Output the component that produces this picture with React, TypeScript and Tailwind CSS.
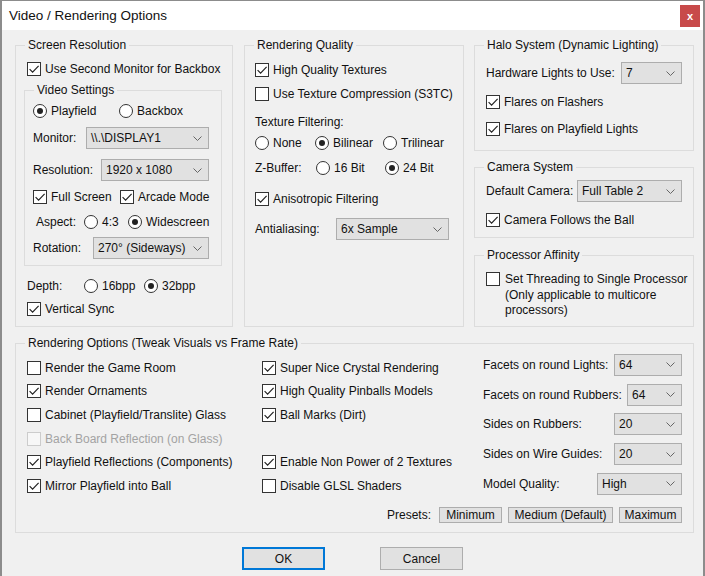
import React from 'react';

type CheckProps = { checked?: boolean; disabled?: boolean; label: string; className?: string };

const Check = ({ checked, disabled, label, className = '' }: CheckProps) => (
  <div className={`flex h-[16px] items-center ${className}`}>
    <span
      className={`flex h-[14px] w-[14px] shrink-0 items-center justify-center border ${
        disabled ? 'border-[#cccccc] bg-[#f7f7f7]' : 'border-[#333333] bg-white'
      }`}
    >
      {checked && (
        <svg width="12" height="12" viewBox="0 0 12 12">
          <path d="M1.6 6.1 L4.6 9.1 L10.6 2.9" fill="none" stroke="#222" strokeWidth="1.2" />
        </svg>
      )}
    </span>
    <span className={`ml-[4px] whitespace-nowrap ${disabled ? 'text-[#a3a3a3]' : ''}`}>{label}</span>
  </div>
);

const Radio = ({ checked, label, className = '' }: { checked?: boolean; label: string; className?: string }) => (
  <div className={`flex h-[16px] items-center ${className}`}>
    <span className="flex h-[14px] w-[14px] shrink-0 items-center justify-center rounded-full border border-[#333333] bg-white">
      {checked && <span className="h-[6px] w-[6px] rounded-full bg-[#222]" />}
    </span>
    <span className="ml-[4px] whitespace-nowrap">{label}</span>
  </div>
);

const Select = ({ value, w, className = '' }: { value: string; w: string; className?: string }) => (
  <div
    className={`flex h-[22px] shrink-0 items-center justify-between border border-[#adadad] bg-[#e1e1e1] pl-[4px] pr-[6px] ${w} ${className}`}
  >
    <span className="whitespace-nowrap">{value}</span>
    <svg width="9" height="5" viewBox="0 0 9 5">
      <path d="M0.5 0.5 L4.5 4.5 L8.5 0.5" fill="none" stroke="#666" />
    </svg>
  </div>
);

const Group = ({ title, className = '', children }: { title: string; className?: string; children: React.ReactNode }) => (
  <fieldset className={`border border-[#dcdcdc] ${className}`}>
    <legend className="ml-[9px] px-[3px] leading-[14px]">{title}</legend>
    {children}
  </fieldset>
);

const Button = ({ label, w, def }: { label: string; w: string; def?: boolean }) => (
  <div
    className={`flex h-[23px] items-center justify-center bg-[#e1e1e1] ${w} ${
      def ? 'border-2 border-[#0078d7]' : 'border border-[#adadad]'
    }`}
  >
    {label}
  </div>
);

const Preset = ({ label, w }: { label: string; w: string }) => (
  <div className={`flex h-[16px] items-center justify-center border border-[#adadad] bg-[#e1e1e1] ${w}`}>{label}</div>
);

export default function App() {
  return (
    <div className="h-[576px] w-[705px] overflow-hidden border-x-2 border-t border-[#8c8c8c] bg-[#f0f0f0] font-['Liberation_Sans',Arial,sans-serif] text-[12px] leading-[14px] text-[#111]">
      {/* title bar */}
      <div className="flex h-[29px] items-center justify-between bg-white pl-[7px] pr-[3px]">
        <span className="text-[13.5px]">Video / Rendering Options</span>
        <div className="flex h-[22px] w-[20px] items-center justify-center bg-[#c84a4a] text-[11px] font-bold text-white">
          x
        </div>
      </div>

      <div className="pl-[13px] pt-[8px]">
        <div className="flex items-start">
          {/* column 1 */}
          <Group title="Screen Resolution" className="h-[289px] w-[218px]">
            <div className="pl-[8px] pr-[10px]">
              <Check checked label="Use Second Monitor for Backbox" className="ml-[3px] mt-[9px]" />
              <Group title="Video Settings" className="mt-[6px]">
                <div className="pb-[6px] pl-[8px] pr-[11px]">
                  <div className="mt-[6px] flex">
                    <Radio checked label="Playfield" className="w-[86px]" />
                    <Radio label="Backbox" />
                  </div>
                  <div className="mt-[8px] flex items-center">
                    <span className="w-[53px]">Monitor:</span>
                    <Select value={'\\\\.\\DISPLAY1'} w="w-[123px]" />
                  </div>
                  <div className="mt-[10px] flex items-center">
                    <span className="w-[68px]">Resolution:</span>
                    <Select value="1920 x 1080" w="w-[108px]" />
                  </div>
                  <div className="mt-[8px] flex">
                    <Check checked label="Full Screen" className="w-[87px]" />
                    <Check checked label="Arcade Mode" />
                  </div>
                  <div className="ml-[3px] mt-[9px] flex items-center">
                    <span className="w-[48px]">Aspect:</span>
                    <Radio label="4:3" className="w-[44px]" />
                    <Radio checked label="Widescreen" />
                  </div>
                  <div className="mt-[7px] flex items-center">
                    <span className="w-[60px]">Rotation:</span>
                    <Select value="270° (Sideways)" w="w-[116px]" />
                  </div>
                </div>
              </Group>
              <div className="ml-[3px] mt-[12px] flex items-center">
                <span className="w-[57px]">Depth:</span>
                <Radio label="16bpp" className="w-[60px]" />
                <Radio checked label="32bpp" />
              </div>
              <Check checked label="Vertical Sync" className="ml-[3px] mt-[7px]" />
            </div>
          </Group>

          {/* column 2 */}
          <Group title="Rendering Quality" className="ml-[11px] h-[289px] w-[220px]">
            <div className="pl-[10px]">
              <Check checked label="High Quality Textures" className="mt-[10px]" />
              <Check label="Use Texture Compression (S3TC)" className="mt-[8px]" />
              <div className="mt-[13px] h-[14px]">Texture Filtering:</div>
              <div className="mt-[6px] flex">
                <Radio label="None" className="w-[60px]" />
                <Radio checked label="Bilinear" className="w-[68px]" />
                <Radio label="Trilinear" />
              </div>
              <div className="mt-[9px] flex items-center">
                <span className="w-[61px]">Z-Buffer:</span>
                <Radio label="16 Bit" className="w-[69px]" />
                <Radio checked label="24 Bit" />
              </div>
              <Check checked label="Anisotropic Filtering" className="mt-[15px]" />
              <div className="mt-[11px] flex items-center">
                <span className="w-[81px]">Antialiasing:</span>
                <Select value="6x Sample" w="w-[113px]" />
              </div>
            </div>
          </Group>

          {/* column 3 */}
          <div className="ml-[10px] flex w-[220px] flex-col">
            <Group title="Halo System (Dynamic Lighting)" className="h-[113px]">
              <div className="pl-[11px]">
                <div className="mt-[10px] flex items-center">
                  <span className="w-[135px]">Hardware Lights to Use:</span>
                  <Select value="7" w="w-[61px]" />
                </div>
                <Check checked label="Flares on Flashers" className="mt-[10px]" />
                <Check checked label="Flares on Playfield Lights" className="mt-[11px]" />
              </div>
            </Group>
            <Group title="Camera System" className="mt-[9px] h-[78px]">
              <div className="pl-[11px]">
                <div className="mt-[6px] flex items-center">
                  <span className="w-[91px]">Default Camera:</span>
                  <Select value="Full Table 2" w="w-[105px]" />
                </div>
                <Check checked label="Camera Follows the Ball" className="mt-[10px]" />
              </div>
            </Group>
            <Group title="Processor Affinity" className="mt-[10px] h-[79px]">
              <div className="mt-[10px] flex items-start pl-[11px]">
                <span className="h-[14px] w-[14px] shrink-0 border border-[#333333] bg-white" />
                <span className="ml-[5px] whitespace-nowrap leading-[15.5px]">
                  Set Threading to Single Processor
                  <br />
                  (Only applicable to multicore
                  <br />
                  processors)
                </span>
              </div>
            </Group>
          </div>
        </div>

        {/* rendering options */}
        <Group title="Rendering Options (Tweak Visuals vs Frame Rate)" className="mt-[9px] h-[197px] w-[679px]">
          <div className="pl-[11px] pr-[10px]">
            <div className="grid grid-cols-[235px_221px_199px]">
              <div className="mt-[6px] flex flex-col">
                <div className="flex h-[23.6px] items-center"><Check label="Render the Game Room" /></div>
                <div className="flex h-[23.6px] items-center"><Check checked label="Render Ornaments" /></div>
                <div className="flex h-[23.6px] items-center"><Check label="Cabinet (Playfield/Translite) Glass" /></div>
                <div className="flex h-[23.6px] items-center"><Check disabled label="Back Board Reflection (on Glass)" /></div>
                <div className="flex h-[23.6px] items-center"><Check checked label="Playfield Reflections (Components)" /></div>
                <div className="flex h-[23.6px] items-center"><Check checked label="Mirror Playfield into Ball" /></div>
              </div>
              <div className="mt-[6px] flex flex-col">
                <div className="flex h-[23.6px] items-center"><Check checked label="Super Nice Crystal Rendering" /></div>
                <div className="flex h-[23.6px] items-center"><Check checked label="High Quality Pinballs Models" /></div>
                <div className="flex h-[23.6px] items-center"><Check checked label="Ball Marks (Dirt)" /></div>
                <div className="h-[23.6px]" />
                <div className="flex h-[23.6px] items-center"><Check checked label="Enable Non Power of 2 Textures" /></div>
                <div className="flex h-[23.6px] items-center"><Check label="Disable GLSL Shaders" /></div>
              </div>
              <div className="flex flex-col">
                <div className="flex h-[29.75px] items-center">
                  <span>Facets on round Lights:</span>
                  <Select value="64" w="w-[68px]" className="ml-auto" />
                </div>
                <div className="flex h-[29.75px] items-center">
                  <span>Facets on round Rubbers:</span>
                  <Select value="64" w="w-[55px]" className="ml-auto" />
                </div>
                <div className="flex h-[29.75px] items-center">
                  <span>Sides on Rubbers:</span>
                  <Select value="20" w="w-[68px]" className="ml-auto" />
                </div>
                <div className="flex h-[29.75px] items-center">
                  <span>Sides on Wire Guides:</span>
                  <Select value="20" w="w-[68px]" className="ml-auto" />
                </div>
                <div className="flex h-[29.75px] items-center">
                  <span>Model Quality:</span>
                  <Select value="High" w="w-[85px]" className="ml-auto" />
                </div>
              </div>
            </div>
            <div className="mr-[1px] mt-[8px] flex items-center justify-end gap-[6px]">
              <span className="mr-[2px]">Presets:</span>
              <Preset label="Minimum" w="w-[63px]" />
              <Preset label="Medium (Default)" w="w-[105px]" />
              <Preset label="Maximum" w="w-[63px]" />
            </div>
          </div>
        </Group>
      </div>

      {/* dialog buttons */}
      <div className="mt-[14px] flex justify-center gap-[55px]">
        <Button label="OK" w="w-[83px]" def />
        <Button label="Cancel" w="w-[83px]" />
      </div>
    </div>
  );
}
